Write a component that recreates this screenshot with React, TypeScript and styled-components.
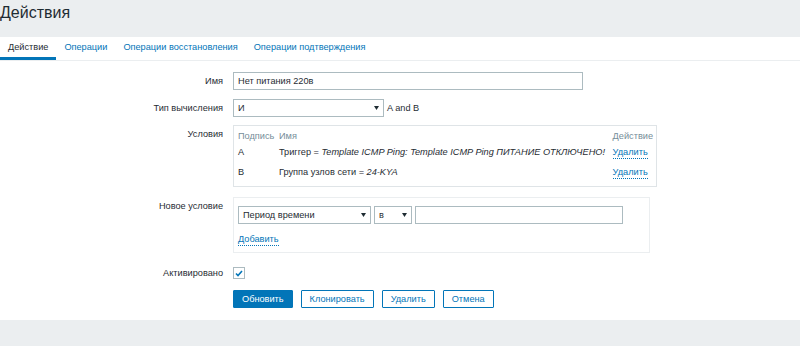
import * as React from "react";
import styled, { createGlobalStyle } from "styled-components";

const GlobalStyle = createGlobalStyle`
    html, body {
        margin: 0;
        padding: 0;
        background: #ffffff;
    }
    body {
        font-family: "Liberation Sans", Arial, sans-serif;
        font-size: 9.2px;
        color: #1f2c33;
    }
`;

const Page = styled.div`
    display: flex;
    flex-direction: column;
    width: 800px;
    height: 346px;
    overflow: hidden;
`;

const Header = styled.header`
    height: 37px;
    box-sizing: border-box;
    padding-top: 4px;
    background: #ebeef0;
`;

const Title = styled.h1`
    margin: 0;
    font-size: 16px;
    line-height: 18px;
    font-weight: normal;
    color: #1f2c33;
`;

const Main = styled.main`
    flex: 1;
    background: #ffffff;
`;

const Footer = styled.footer`
    height: 26px;
    background: #ebeef0;
`;

const TabBar = styled.nav`
    display: flex;
    height: 24px;
    box-sizing: border-box;
    border-bottom: 1px solid #ebeef0;
`;

const Tab = styled.a<{ $active?: boolean }>`
    display: block;
    padding: 0 8px;
    line-height: 21px;
    height: 23px;
    box-sizing: border-box;
    color: ${p => (p.$active ? "#1f2c33" : "#0275b8")};
    border-bottom: 3px solid ${p => (p.$active ? "#0275b8" : "transparent")};
    margin-bottom: -1px;
    white-space: nowrap;
`;

const Row = styled.div<{ $mt: number }>`
    display: flex;
    align-items: flex-start;
    margin-top: ${p => p.$mt}px;
`;

const Label = styled.div`
    width: 223px;
    margin-right: 10px;
    text-align: right;
    line-height: 18px;
    white-space: nowrap;
`;

const Field = styled.div`
    display: flex;
    align-items: center;
    line-height: 18px;
`;

const TextBox = styled.div<{ $w: number }>`
    width: ${p => p.$w}px;
    height: 18px;
    box-sizing: border-box;
    border: 1px solid #acbbc0;
    padding-left: 4px;
    line-height: 16px;
    background: #ffffff;
    white-space: nowrap;
`;

const SelectBox = styled(TextBox)`
    position: relative;
    svg {
        position: absolute;
        right: 4px;
        top: 6px;
    }
`;

const Hint = styled.span`
    margin-left: 3px;
`;

const Box = styled.div<{ $w: number; $border: string }>`
    width: ${p => p.$w}px;
    box-sizing: border-box;
    border: 1px solid ${p => p.$border};
    padding: 4px 3px 4px 4px;
`;

const CondTable = styled.div`
    display: grid;
    grid-template-columns: 38px 1fr auto;
    column-gap: 3px;
`;

const Th = styled.div<{ $right?: boolean }>`
    color: #768d99;
    line-height: 12px;
    text-align: ${p => (p.$right ? "right" : "left")};
`;

const Td = styled.div`
    line-height: 20px;
    white-space: nowrap;
`;

const Em = styled.i``;

const Link = styled.a`
    color: #0275b8;
    border-bottom: 1px dotted #0275b8;
    line-height: 11px;
    display: inline-block;
    cursor: pointer;
`;

const InlineFields = styled.div`
    display: flex;
    gap: 3px;
    margin-top: 4px;
`;

const AddLine = styled.div`
    margin-top: 6px;
    line-height: 18px;
`;

const Check = styled.div`
    width: 12px;
    height: 12px;
    margin-top: 3px;
    box-sizing: border-box;
    border: 1px solid #acbbc0;
    display: flex;
    align-items: center;
    justify-content: center;
    background: #ffffff;
`;

const Buttons = styled.div`
    display: flex;
    gap: 8px;
`;

const Button = styled.button<{ $primary?: boolean }>`
    height: 18px;
    padding: 0 8px;
    font-family: inherit;
    font-size: 9.2px;
    line-height: 16px;
    border: 1px solid #0275b8;
    border-radius: 1px;
    background: ${p => (p.$primary ? "#0275b8" : "#ffffff")};
    color: ${p => (p.$primary ? "#ffffff" : "#0275b8")};
    cursor: pointer;
`;

const Arrow = () => (
    <svg width="5" height="4" viewBox="0 0 5 4">
        <polygon points="0,0 5,0 2.5,4" fill="#1f2c33" />
    </svg>
);

const tabs = ["Действие", "Операции", "Операции восстановления", "Операции подтверждения"];

const conditions = [
    { label: "A", name: "Триггер = ", value: "Template ICMP Ping: Template ICMP Ping ПИТАНИЕ ОТКЛЮЧЕНО!" },
    { label: "B", name: "Группа узлов сети = ", value: "24-KYA" },
];

export default function App() {
    return (
        <Page>
            <GlobalStyle />
            <Header>
                <Title>Действия</Title>
            </Header>
            <Main>
                <TabBar>
                    {tabs.map((t, i) => (
                        <Tab key={t} $active={i === 0}>{t}</Tab>
                    ))}
                </TabBar>

                <Row $mt={11}>
                    <Label>Имя</Label>
                    <Field>
                        <TextBox $w={350}>Нет питания 220в</TextBox>
                    </Field>
                </Row>

                <Row $mt={9}>
                    <Label>Тип вычисления</Label>
                    <Field>
                        <SelectBox $w={151}>И<Arrow /></SelectBox>
                        <Hint>A and B</Hint>
                    </Field>
                </Row>

                <Row $mt={8}>
                    <Label>Условия</Label>
                    <Box $w={424} $border="#dfe4e7">
                        <CondTable>
                            <Th>Подпись</Th>
                            <Th>Имя</Th>
                            <Th $right>Действие</Th>
                            {conditions.map(c => (
                                <React.Fragment key={c.label}>
                                    <Td>{c.label}</Td>
                                    <Td>{c.name}<Em>{c.value}</Em></Td>
                                    <Td><Link>Удалить</Link></Td>
                                </React.Fragment>
                            ))}
                        </CondTable>
                    </Box>
                </Row>

                <Row $mt={10}>
                    <Label>Новое условие</Label>
                    <Box $w={417} $border="#ebeef0">
                        <InlineFields>
                            <SelectBox $w={133}>Период времени<Arrow /></SelectBox>
                            <SelectBox $w={38}>в<Arrow /></SelectBox>
                            <TextBox $w={208} />
                        </InlineFields>
                        <AddLine><Link>Добавить</Link></AddLine>
                    </Box>
                </Row>

                <Row $mt={11}>
                    <Label>Активировано</Label>
                    <Check>
                        <svg width="8" height="7" viewBox="0 0 8 7">
                            <path d="M1 3.5 L3 5.5 L7 1" fill="none" stroke="#0275b8" strokeWidth="1.6" />
                        </svg>
                    </Check>
                </Row>

                <Row $mt={8}>
                    <Label />
                    <Buttons>
                        <Button $primary>Обновить</Button>
                        <Button>Клонировать</Button>
                        <Button>Удалить</Button>
                        <Button>Отмена</Button>
                    </Buttons>
                </Row>
            </Main>
            <Footer />
        </Page>
    );
}
